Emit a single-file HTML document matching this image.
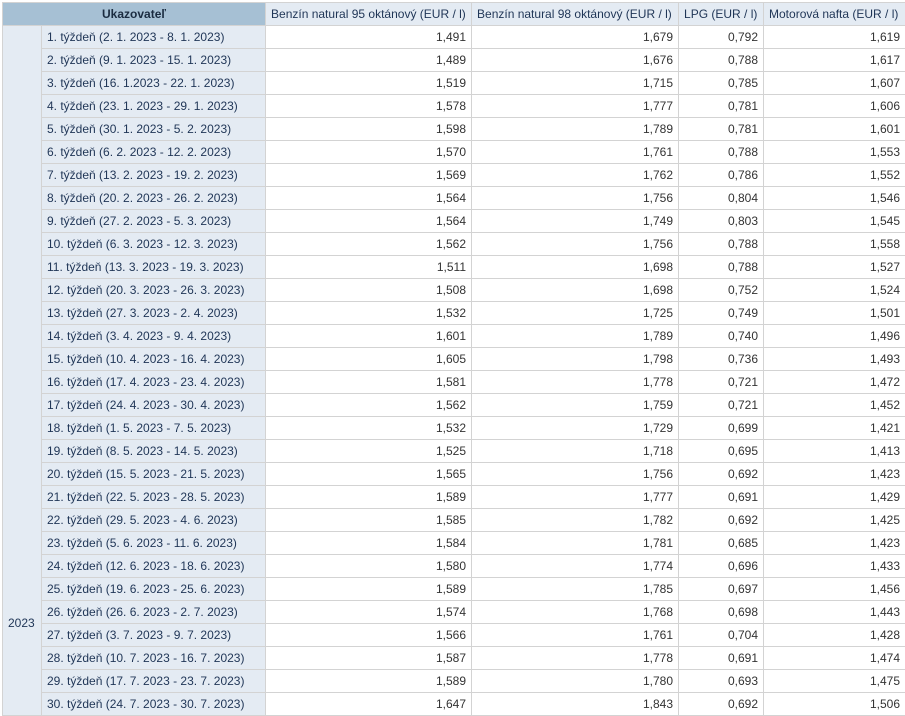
<!DOCTYPE html><html><head><meta charset="utf-8"><style>
body{margin:0;background:#fff;font-family:"Liberation Sans",Arial,sans-serif;font-size:12px}
table{position:absolute;left:2px;top:2px;border-collapse:collapse;table-layout:fixed;width:903px}
td,th{border:1px solid #d3d3d3;height:22px;padding:0 5px;white-space:nowrap;overflow:hidden;box-sizing:border-box}
th{font-weight:normal;background:#e4ebf3;color:#1f3556;text-align:left}
th.u{background:#a6c0d4;text-align:center;font-weight:bold;color:#1a2b40}
td.y{background:#e4ebf3;color:#1f3556;vertical-align:top;padding-top:590px}
td.l{background:#e4ebf3;color:#1f3556}
td.n{text-align:right;color:#333}
tr{height:23px}
</style></head><body>
<table>
<colgroup><col style="width:39px"><col style="width:224px"><col style="width:206px"><col style="width:207px"><col style="width:85px"><col style="width:142px"></colgroup>
<tr><th class="u" colspan="2">Ukazovateľ</th><th>Benzín natural 95 oktánový (EUR / l)</th><th>Benzín natural 98 oktánový (EUR / l)</th><th>LPG (EUR / l)</th><th>Motorová nafta (EUR / l)</th></tr>
<tr><td class="y" rowspan="30">2023</td><td class="l">1. týždeň (2. 1. 2023 - 8. 1. 2023)</td><td class="n">1,491</td><td class="n">1,679</td><td class="n">0,792</td><td class="n">1,619</td></tr>
<tr><td class="l">2. týždeň (9. 1. 2023 - 15. 1. 2023)</td><td class="n">1,489</td><td class="n">1,676</td><td class="n">0,788</td><td class="n">1,617</td></tr>
<tr><td class="l">3. týždeň (16. 1.2023 - 22. 1. 2023)</td><td class="n">1,519</td><td class="n">1,715</td><td class="n">0,785</td><td class="n">1,607</td></tr>
<tr><td class="l">4. týždeň (23. 1. 2023 - 29. 1. 2023)</td><td class="n">1,578</td><td class="n">1,777</td><td class="n">0,781</td><td class="n">1,606</td></tr>
<tr><td class="l">5. týždeň (30. 1. 2023 - 5. 2. 2023)</td><td class="n">1,598</td><td class="n">1,789</td><td class="n">0,781</td><td class="n">1,601</td></tr>
<tr><td class="l">6. týždeň (6. 2. 2023 - 12. 2. 2023)</td><td class="n">1,570</td><td class="n">1,761</td><td class="n">0,788</td><td class="n">1,553</td></tr>
<tr><td class="l">7. týždeň (13. 2. 2023 - 19. 2. 2023)</td><td class="n">1,569</td><td class="n">1,762</td><td class="n">0,786</td><td class="n">1,552</td></tr>
<tr><td class="l">8. týždeň (20. 2. 2023 - 26. 2. 2023)</td><td class="n">1,564</td><td class="n">1,756</td><td class="n">0,804</td><td class="n">1,546</td></tr>
<tr><td class="l">9. týždeň (27. 2. 2023 - 5. 3. 2023)</td><td class="n">1,564</td><td class="n">1,749</td><td class="n">0,803</td><td class="n">1,545</td></tr>
<tr><td class="l">10. týždeň (6. 3. 2023 - 12. 3. 2023)</td><td class="n">1,562</td><td class="n">1,756</td><td class="n">0,788</td><td class="n">1,558</td></tr>
<tr><td class="l">11. týždeň (13. 3. 2023 - 19. 3. 2023)</td><td class="n">1,511</td><td class="n">1,698</td><td class="n">0,788</td><td class="n">1,527</td></tr>
<tr><td class="l">12. týždeň (20. 3. 2023 - 26. 3. 2023)</td><td class="n">1,508</td><td class="n">1,698</td><td class="n">0,752</td><td class="n">1,524</td></tr>
<tr><td class="l">13. týždeň (27. 3. 2023 - 2. 4. 2023)</td><td class="n">1,532</td><td class="n">1,725</td><td class="n">0,749</td><td class="n">1,501</td></tr>
<tr><td class="l">14. týždeň (3. 4. 2023 - 9. 4. 2023)</td><td class="n">1,601</td><td class="n">1,789</td><td class="n">0,740</td><td class="n">1,496</td></tr>
<tr><td class="l">15. týždeň (10. 4. 2023 - 16. 4. 2023)</td><td class="n">1,605</td><td class="n">1,798</td><td class="n">0,736</td><td class="n">1,493</td></tr>
<tr><td class="l">16. týždeň (17. 4. 2023 - 23. 4. 2023)</td><td class="n">1,581</td><td class="n">1,778</td><td class="n">0,721</td><td class="n">1,472</td></tr>
<tr><td class="l">17. týždeň (24. 4. 2023 - 30. 4. 2023)</td><td class="n">1,562</td><td class="n">1,759</td><td class="n">0,721</td><td class="n">1,452</td></tr>
<tr><td class="l">18. týždeň (1. 5. 2023 - 7. 5. 2023)</td><td class="n">1,532</td><td class="n">1,729</td><td class="n">0,699</td><td class="n">1,421</td></tr>
<tr><td class="l">19. týždeň (8. 5. 2023 - 14. 5. 2023)</td><td class="n">1,525</td><td class="n">1,718</td><td class="n">0,695</td><td class="n">1,413</td></tr>
<tr><td class="l">20. týždeň (15. 5. 2023 - 21. 5. 2023)</td><td class="n">1,565</td><td class="n">1,756</td><td class="n">0,692</td><td class="n">1,423</td></tr>
<tr><td class="l">21. týždeň (22. 5. 2023 - 28. 5. 2023)</td><td class="n">1,589</td><td class="n">1,777</td><td class="n">0,691</td><td class="n">1,429</td></tr>
<tr><td class="l">22. týždeň (29. 5. 2023 - 4. 6. 2023)</td><td class="n">1,585</td><td class="n">1,782</td><td class="n">0,692</td><td class="n">1,425</td></tr>
<tr><td class="l">23. týždeň (5. 6. 2023 - 11. 6. 2023)</td><td class="n">1,584</td><td class="n">1,781</td><td class="n">0,685</td><td class="n">1,423</td></tr>
<tr><td class="l">24. týždeň (12. 6. 2023 - 18. 6. 2023)</td><td class="n">1,580</td><td class="n">1,774</td><td class="n">0,696</td><td class="n">1,433</td></tr>
<tr><td class="l">25. týždeň (19. 6. 2023 - 25. 6. 2023)</td><td class="n">1,589</td><td class="n">1,785</td><td class="n">0,697</td><td class="n">1,456</td></tr>
<tr><td class="l">26. týždeň (26. 6. 2023 - 2. 7. 2023)</td><td class="n">1,574</td><td class="n">1,768</td><td class="n">0,698</td><td class="n">1,443</td></tr>
<tr><td class="l">27. týždeň (3. 7. 2023 - 9. 7. 2023)</td><td class="n">1,566</td><td class="n">1,761</td><td class="n">0,704</td><td class="n">1,428</td></tr>
<tr><td class="l">28. týždeň (10. 7. 2023 - 16. 7. 2023)</td><td class="n">1,587</td><td class="n">1,778</td><td class="n">0,691</td><td class="n">1,474</td></tr>
<tr><td class="l">29. týždeň (17. 7. 2023 - 23. 7. 2023)</td><td class="n">1,589</td><td class="n">1,780</td><td class="n">0,693</td><td class="n">1,475</td></tr>
<tr><td class="l">30. týždeň (24. 7. 2023 - 30. 7. 2023)</td><td class="n">1,647</td><td class="n">1,843</td><td class="n">0,692</td><td class="n">1,506</td></tr>
</table>
</body></html>
